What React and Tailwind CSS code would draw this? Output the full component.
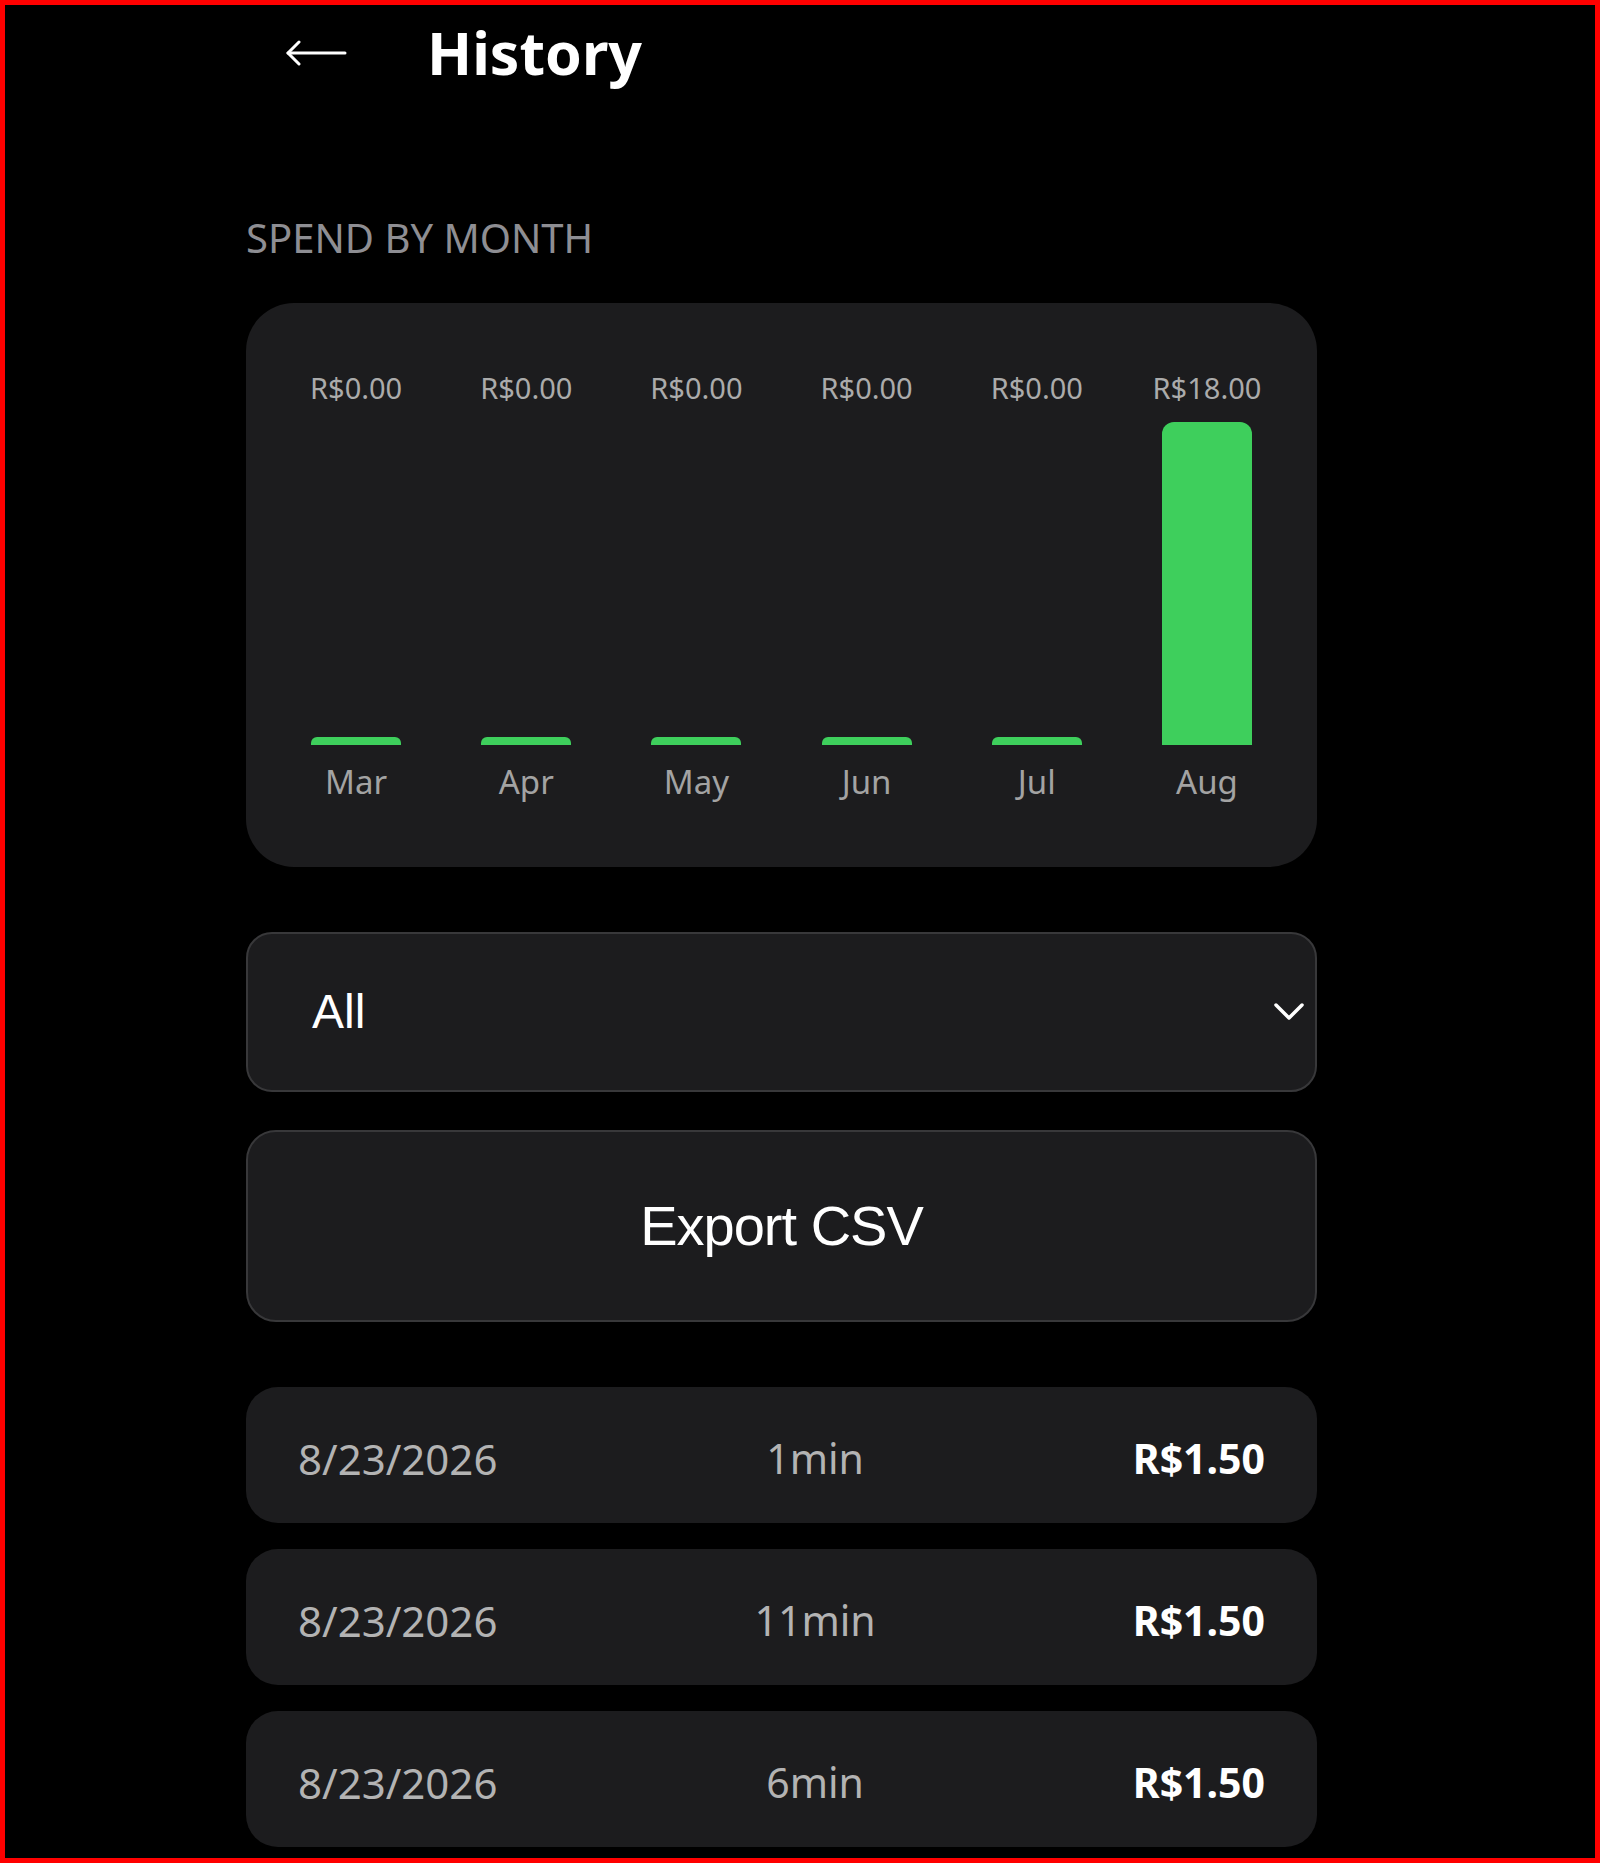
import React from 'react';

const months = [
  { label: 'Mar', value: 0 },
  { label: 'Apr', value: 0 },
  { label: 'May', value: 0 },
  { label: 'Jun', value: 0 },
  { label: 'Jul', value: 0 },
  { label: 'Aug', value: 18 },
];

const sessions = [
  { date: '8/23/2026', duration: '1min', cost: 'R$1.50' },
  { date: '8/23/2026', duration: '11min', cost: 'R$1.50' },
  { date: '8/23/2026', duration: '6min', cost: 'R$1.50' },
];

const MAX_BAR = 323;

const History = () => {
  const max = Math.max(...months.map((m) => m.value));

  return (
    <div className="h-[1863px] overflow-hidden bg-black border-[5px] border-[#ff0000] font-['Noto_Sans',sans-serif]">
      <div className="ml-[241px] w-[1071px]">

        {/* Header */}
        <header className="flex items-center pt-[8px] h-[85px]">
          <button className="ml-[39px] w-[62px] flex items-center pt-[2px]">
            <svg width="62" height="26" viewBox="0 0 62 26" fill="none" stroke="white" strokeWidth="3" strokeLinecap="round" strokeLinejoin="round">
              <path d="M60 13H3" />
              <path d="M14 2L3 13L14 24" />
            </svg>
          </button>
          <h1 className="ml-[80px] text-[59px] leading-[72px] font-bold text-white">History</h1>
        </header>

        {/* Spend by month */}
        <h2 className="mt-[124px] text-[40px] leading-[48px] text-[#8e8e93] uppercase">Spend by month</h2>

        <div className="mt-[41px] bg-[#1c1c1e] rounded-[48px] px-[25px] pt-[67px] pb-[65px] flex">
          {months.map((m) => {
            const h = max > 0 ? Math.max(8, (m.value / max) * MAX_BAR) : 8;
            return (
              <div key={m.label} className="flex-1 flex flex-col items-center">
                <span className="text-[29px] leading-[35px] text-[#ababab]">R${m.value.toFixed(2)}</span>
                <div className="mt-[17px] h-[323px] w-full flex items-end justify-center">
                  <div
                    className={`w-[90px] bg-[#3ecf5c] ${m.value > 0 ? 'rounded-t-[12px]' : 'rounded-t-[6px]'}`}
                    style={{ height: h }}
                  />
                </div>
                <span className="mt-[17px] text-[33px] leading-[40px] text-[#a3a3a3]">{m.label}</span>
              </div>
            );
          })}
        </div>

        {/* Filter */}
        <div className="mt-[65px] h-[160px] bg-[#1c1c1e] border-2 border-[#38383a] rounded-[26px] flex items-center justify-between pl-[64px] pr-[10px]">
          <span className="font-['Liberation_Sans',Arial,sans-serif] text-[48px] text-white">All</span>
          <svg width="32" height="20" viewBox="0 0 32 20" fill="none" stroke="white" strokeWidth="3.5" strokeLinecap="round" strokeLinejoin="round">
            <path d="M3 3L16 16L29 3" />
          </svg>
        </div>

        {/* Export */}
        <button className="mt-[38px] w-full h-[192px] bg-[#1c1c1e] border-2 border-[#38383a] rounded-[30px] flex items-center justify-center">
          <span className="font-['Liberation_Sans',Arial,sans-serif] text-[56px] tracking-[-1px] text-white">Export CSV</span>
        </button>

        {/* Session list */}
        <div className="mt-[65px] flex flex-col gap-[26px]">
          {sessions.map((s, i) => (
            <div key={i} className="h-[136px] bg-[#1c1c1e] rounded-[32px] px-[52px] pt-[7px] flex items-center justify-between">
              <span className="text-[42px] text-[#b3b3b3]">{s.date}</span>
              <span className="text-[41px] text-[#b3b3b3]">{s.duration}</span>
              <span className="text-[41px] font-bold text-white">{s.cost}</span>
            </div>
          ))}
        </div>

      </div>
    </div>
  );
};

export default History;
